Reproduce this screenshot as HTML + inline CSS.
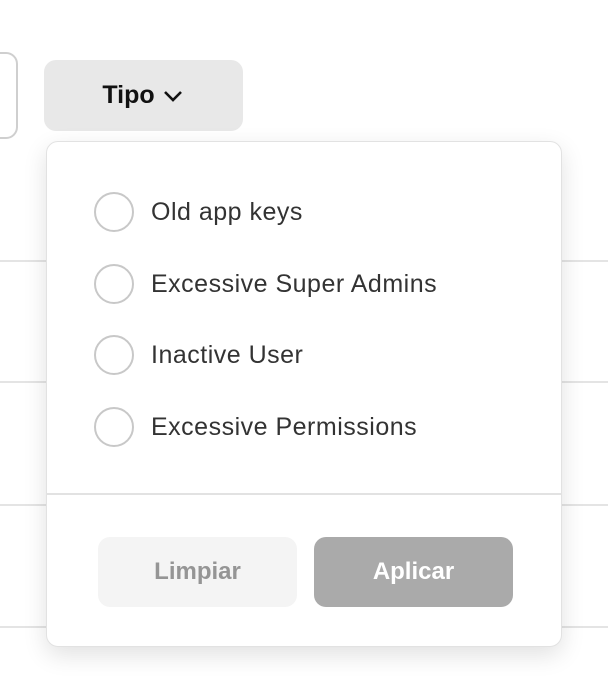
<!DOCTYPE html>
<html><head><meta charset="utf-8"><style>
*{box-sizing:border-box;margin:0;padding:0}
body{width:608px;height:696px;background:#fff;position:relative;overflow:hidden;font-family:"Liberation Sans",sans-serif}
.line{position:absolute;left:0;width:608px;height:2px;background:#e4e4e4}
.lbox{position:absolute;left:-30px;top:52px;width:48px;height:87px;border:2px solid #cfcfcf;border-radius:12px;background:#fff}
.tipo{position:absolute;left:44px;top:60px;width:199px;height:71px;background:#e8e8e8;border-radius:12px;display:flex;align-items:center;justify-content:center;font-weight:bold;font-size:25px;color:#111}
.panel{position:absolute;left:46px;top:141px;width:516px;height:506px;background:#fff;border:1px solid #e2e2e2;border-radius:12px;box-shadow:0 8px 24px rgba(0,0,0,.12)}
.opt{position:absolute;left:47px;display:flex;align-items:center;font-size:25px;letter-spacing:.5px;color:#333}
.opt i{display:block;width:40px;height:40px;border:2px solid #c8c8c8;border-radius:50%;margin-right:17px}
.div{position:absolute;left:0;right:0;top:351px;height:2px;background:#e2e2e2}
.btn{position:absolute;top:395px;width:199px;height:70px;border-radius:12px;display:flex;align-items:center;justify-content:center;font-weight:bold;font-size:24px}
</style></head><body>
<div class="line" style="top:260px"></div>
<div class="line" style="top:381px"></div>
<div class="line" style="top:504px"></div>
<div class="line" style="top:626px"></div>
<div class="lbox"></div>
<div class="tipo">Tipo<svg width="24" height="24" viewBox="0 0 24 24" style="margin-left:6px"><path d="M4 8l8 8 8-8" fill="none" stroke="#111" stroke-width="2.6"/></svg></div>
<div class="panel">
<div class="opt" style="top:50px"><i></i>Old app keys</div>
<div class="opt" style="top:122px"><i></i>Excessive Super Admins</div>
<div class="opt" style="top:193px"><i></i>Inactive User</div>
<div class="opt" style="top:265px"><i></i>Excessive Permissions</div>
<div class="div"></div>
<div class="btn" style="left:51px;background:#f4f4f4;color:#959595">Limpiar</div>
<div class="btn" style="left:267px;background:#aaaaaa;color:#fff">Aplicar</div>
</div>
</body></html>
